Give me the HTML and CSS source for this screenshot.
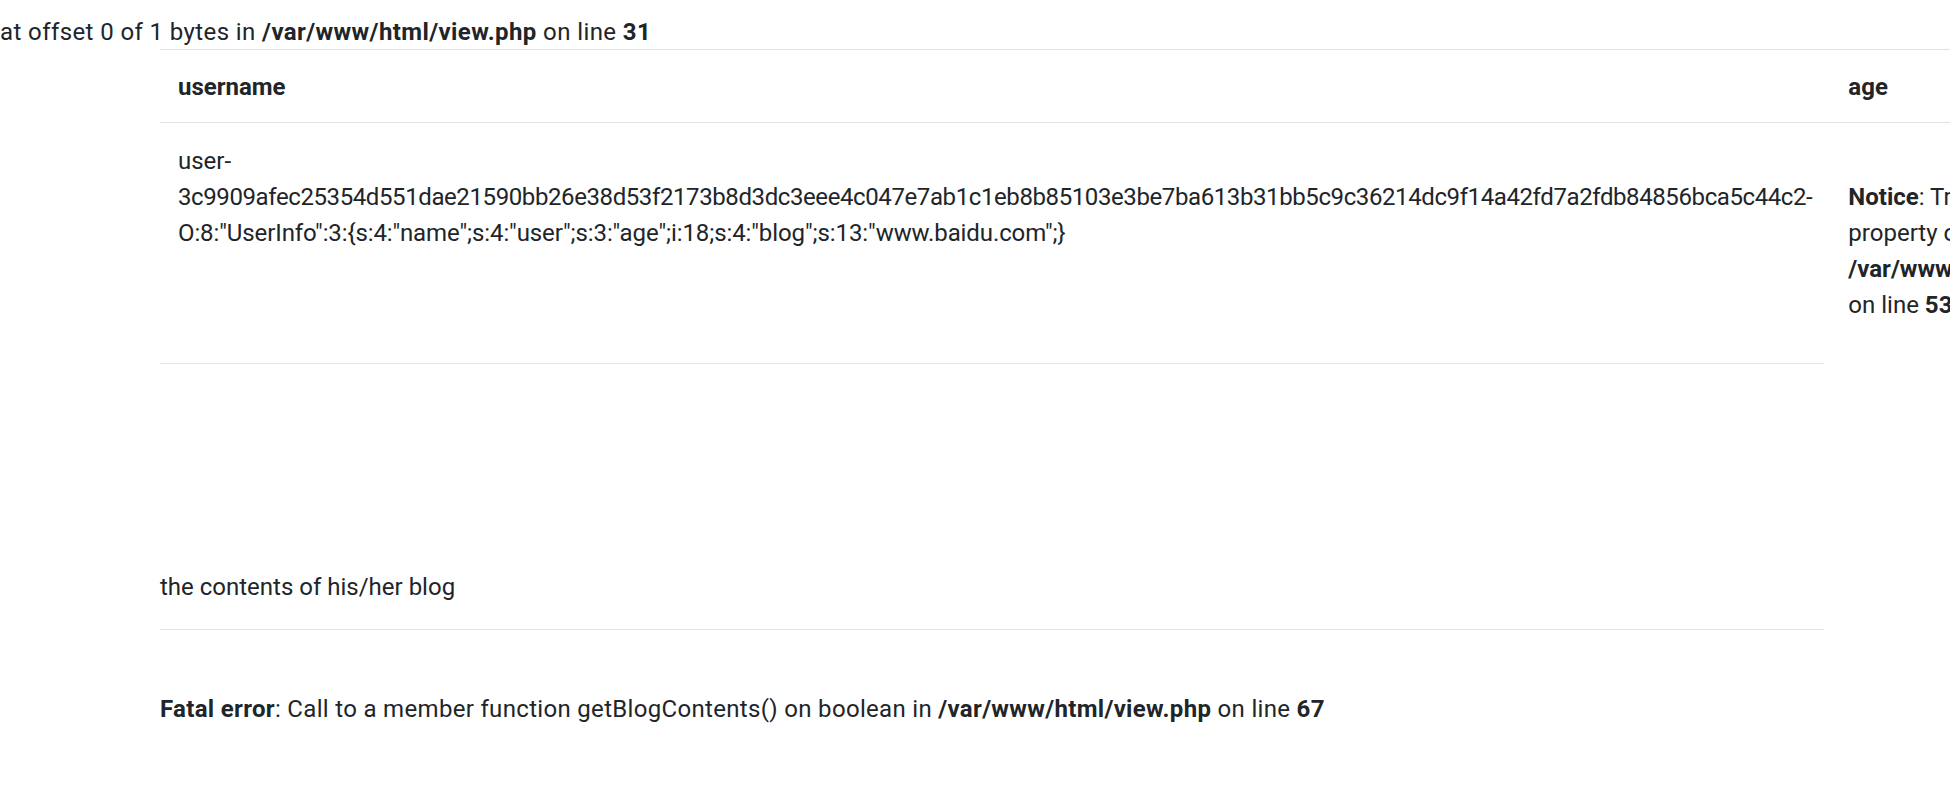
FILE: index.html
```html
<!DOCTYPE html>
<html>
<head>
<meta charset="utf-8">
<title>view</title>
<link rel="stylesheet" href="styles.css">
</head>
<body>
<div class="warn">at offset 0 of 1 bytes in <b>/var/www/html/view.php</b> on line <b>31</b></div>
<div class="container">
  <table class="table">
    <tr>
      <th>username</th>
      <th>age</th>
    </tr>
    <tr>
      <td class="user-cell">user-<span class="hash">3c9909afec25354d551dae21590bb26e38d53f2173b8d3dc3eee4c047e7ab1c1eb8b85103e3be7ba613b31bb5c9c36214dc9f14a42fd7a2fdb84856bca5c44c2-</span><span class="ser">O:8:"UserInfo":3:{s:4:"name";s:4:"user";s:3:"age";i:18;s:4:"blog";s:13:"www.baidu.com";}</span></td>
      <td class="notice-cell"><br><b>Notice</b>: Trying to get property of non-object in <b>/var/www/html/view.php</b> on line <b>53</b><br></td>
    </tr>
  </table>
  <hr class="rule">
  <p class="blog-title">the contents of his/her blog</p>
  <hr class="rule">
  <div class="fatal"><br><b>Fatal error</b>: Call to a member function getBlogContents() on boolean in <b>/var/www/html/view.php</b> on line <b>67</b><br></div>
</div>
</body>
</html>
```
FILE: styles.css
```css
html, body {
  overflow: hidden;
}
body {
  margin: 0;
  font-family: Roboto, "Liberation Sans", sans-serif;
  font-size: 24px;
  line-height: 36px;
  color: #212529;
  background: #ffffff;
}
b {
  font-weight: 700;
}
.warn {
  padding-top: 14px;
  white-space: nowrap;
  letter-spacing: 0.4px;
}
.container {
  width: 1664px;
  margin-left: 160px;
  margin-top: -1px;
}
.table {
  border-collapse: collapse;
  width: 100%;
  margin: 0;
}
.table th,
.table td {
  padding: 18px;
  border-top: 1px solid #dee2e6;
  text-align: left;
  vertical-align: top;
}
.table th {
  font-weight: 700;
  padding-top: 19px;
  padding-bottom: 17px;
}
.table td {
  padding-top: 20px;
  padding-bottom: 16px;
}
.hash {
  letter-spacing: -0.4px;
}
.ser {
  letter-spacing: -0.1px;
}
.rule {
  margin: 24px 0;
  border: 0;
  border-top: 1px solid rgba(0, 0, 0, 0.1);
  height: 0;
}
.blog-title {
  margin: 205px 0 0;
}
.fatal {
  margin: 0;
  padding-top: 1px;
  letter-spacing: 0.32px;
}
```
